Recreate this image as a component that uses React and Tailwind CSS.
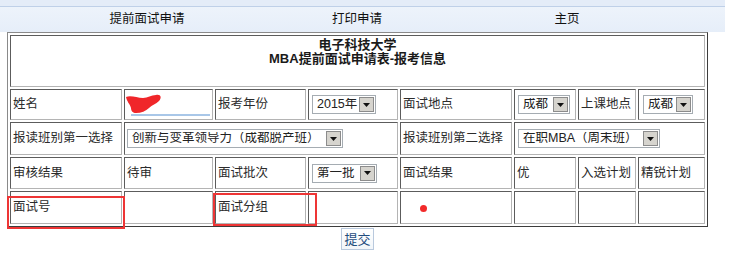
import React from "react";

const font = { fontFamily: '"Liberation Sans", "Noto Sans CJK SC", sans-serif' };

const cell =
  "flex items-center px-[2px] text-[12.5px] leading-none text-[#2b2b2b] border border-t-[#5c5c5c] border-l-[#5c5c5c] border-b-[#b4b4b4] border-r-[#b4b4b4] bg-white";

// fake old-style select box
const Select = ({ value, className }) => (
  <div className={"flex items-center h-[19px] border border-[#a5acb2] bg-white " + className}>
    <span className="flex-1 pl-[4px] text-[12.5px] leading-none text-[#222] whitespace-nowrap overflow-hidden">
      {value}
    </span>
    <span className="flex items-center justify-center shrink-0 w-[15px] h-[15px] mr-[1px] bg-[#d6d4ce] border border-[#8c8c8c]">
      <svg width="7" height="4" viewBox="0 0 7 4">
        <path d="M0 0h7L3.5 4z" fill="#111" />
      </svg>
    </span>
  </div>
);

const App = () => {
  return (
    <div className="w-[750px] h-[278px] bg-white overflow-hidden relative" style={font}>
      {/* Nav */}
      <div className="w-[725px] h-[32px] bg-[#eaf1fa] flex flex-col">
        <div className="h-[6px] bg-[#e4ecf8]" />
        <div className="h-[1px] bg-[#bfd0e8]" />
        <div className="flex-1 flex items-center pl-[42px] bg-gradient-to-b from-[#edf3fb] to-[#e6eef9]">
          <div className="w-[210px] text-center text-[12.5px] leading-none text-[#111]">提前面试申请</div>
          <div className="w-[210px] text-center text-[12.5px] leading-none text-[#111]">打印申请</div>
          <div className="w-[210px] text-center text-[12.5px] leading-none text-[#111]">主页</div>
        </div>
      </div>

      {/* Form table */}
      <div className="ml-[7px] w-[701px] border border-t-[#8a8a8a] border-l-[#8a8a8a] border-b-[#3c3c3c] border-r-[#3c3c3c] p-[2px] grid grid-cols-[112px_89px_91px_90px_112px_62px_58px_67px] grid-rows-[52px_31px_33px_32px_33px] gap-[2px]">
        <div className="col-span-8 border border-t-[#5c5c5c] border-l-[#5c5c5c] border-b-[#b4b4b4] border-r-[#b4b4b4] flex flex-col items-center pt-[2px] text-[13px] leading-[14px] font-bold text-[#1a1a1a]">
          <div>电子科技大学</div>
          <div>MBA提前面试申请表-报考信息</div>
        </div>

        <div className={cell}>姓名</div>
        <div className={cell + " relative"}>
          <div className="ml-[4px] mt-[20px] w-[83px] h-[2px] bg-[#a9c7e8]" />
          <svg className="absolute left-[0px] top-[4px]" width="40" height="22" viewBox="0 0 40 22">
            <path
              d="M1 3 C6 1 12 4 18 4 C23 4 26 1 31 1 C36 0 37 4 34 7 C31 10 27 11 24 14 C21 17 16 19 11 19 C8 19 6 17 6 14 C5 10 2 8 1 3Z"
              fill="#f0262a"
            />
          </svg>
        </div>
        <div className={cell}>报考年份</div>
        <div className={cell + " pl-[3px]"}>
          <Select value="2015年" className="w-[64px]" />
        </div>
        <div className={cell}>面试地点</div>
        <div className={cell + " pl-[3px]"}>
          <Select value="成都" className="w-[52px]" />
        </div>
        <div className={cell}>上课地点</div>
        <div className={cell + " pl-[4px]"}>
          <Select value="成都" className="w-[50px]" />
        </div>

        <div className={cell}>报读班别第一选择</div>
        <div className={cell + " col-span-3 pl-[2px]"}>
          <Select value="创新与变革领导力（成都脱产班）" className="w-[216px]" />
        </div>
        <div className={cell}>报读班别第二选择</div>
        <div className={cell + " col-span-3 pl-[3px]"}>
          <Select value="在职MBA（周末班）" className="w-[142px]" />
        </div>

        <div className={cell}>审核结果</div>
        <div className={cell}>待审</div>
        <div className={cell}>面试批次</div>
        <div className={cell + " pl-[3px]"}>
          <Select value="第一批" className="w-[65px]" />
        </div>
        <div className={cell}>面试结果</div>
        <div className={cell}>优</div>
        <div className={cell}>入选计划</div>
        <div className={cell}>精锐计划</div>

        <div className={cell}>面试号</div>
        <div className={cell}></div>
        <div className={cell}>面试分组</div>
        <div className={cell}></div>
        <div className={cell}></div>
        <div className={cell}></div>
        <div className={cell}></div>
        <div className={cell}></div>
      </div>

      <div className="w-[715px] flex justify-center mt-[1px]">
        <button className="h-[22px] px-[2px] border border-[#b9c9dd] bg-gradient-to-b from-white to-[#f2f5f9] text-[13px] leading-none text-[#1f4c7c]">
          提交
        </button>
      </div>

      {/* red annotation marks */}
      <div className="absolute left-[7px] top-[196px] w-[118px] h-[33px] border-2 border-[#ee3535]" />
      <div className="absolute left-[213px] top-[193px] w-[104px] h-[33px] border-2 border-[#ee3535]" />
      <div className="absolute left-[420px] top-[205px] w-[7px] h-[7px] rounded-full bg-[#f22a2a]" />
    </div>
  );
};

export default App;
